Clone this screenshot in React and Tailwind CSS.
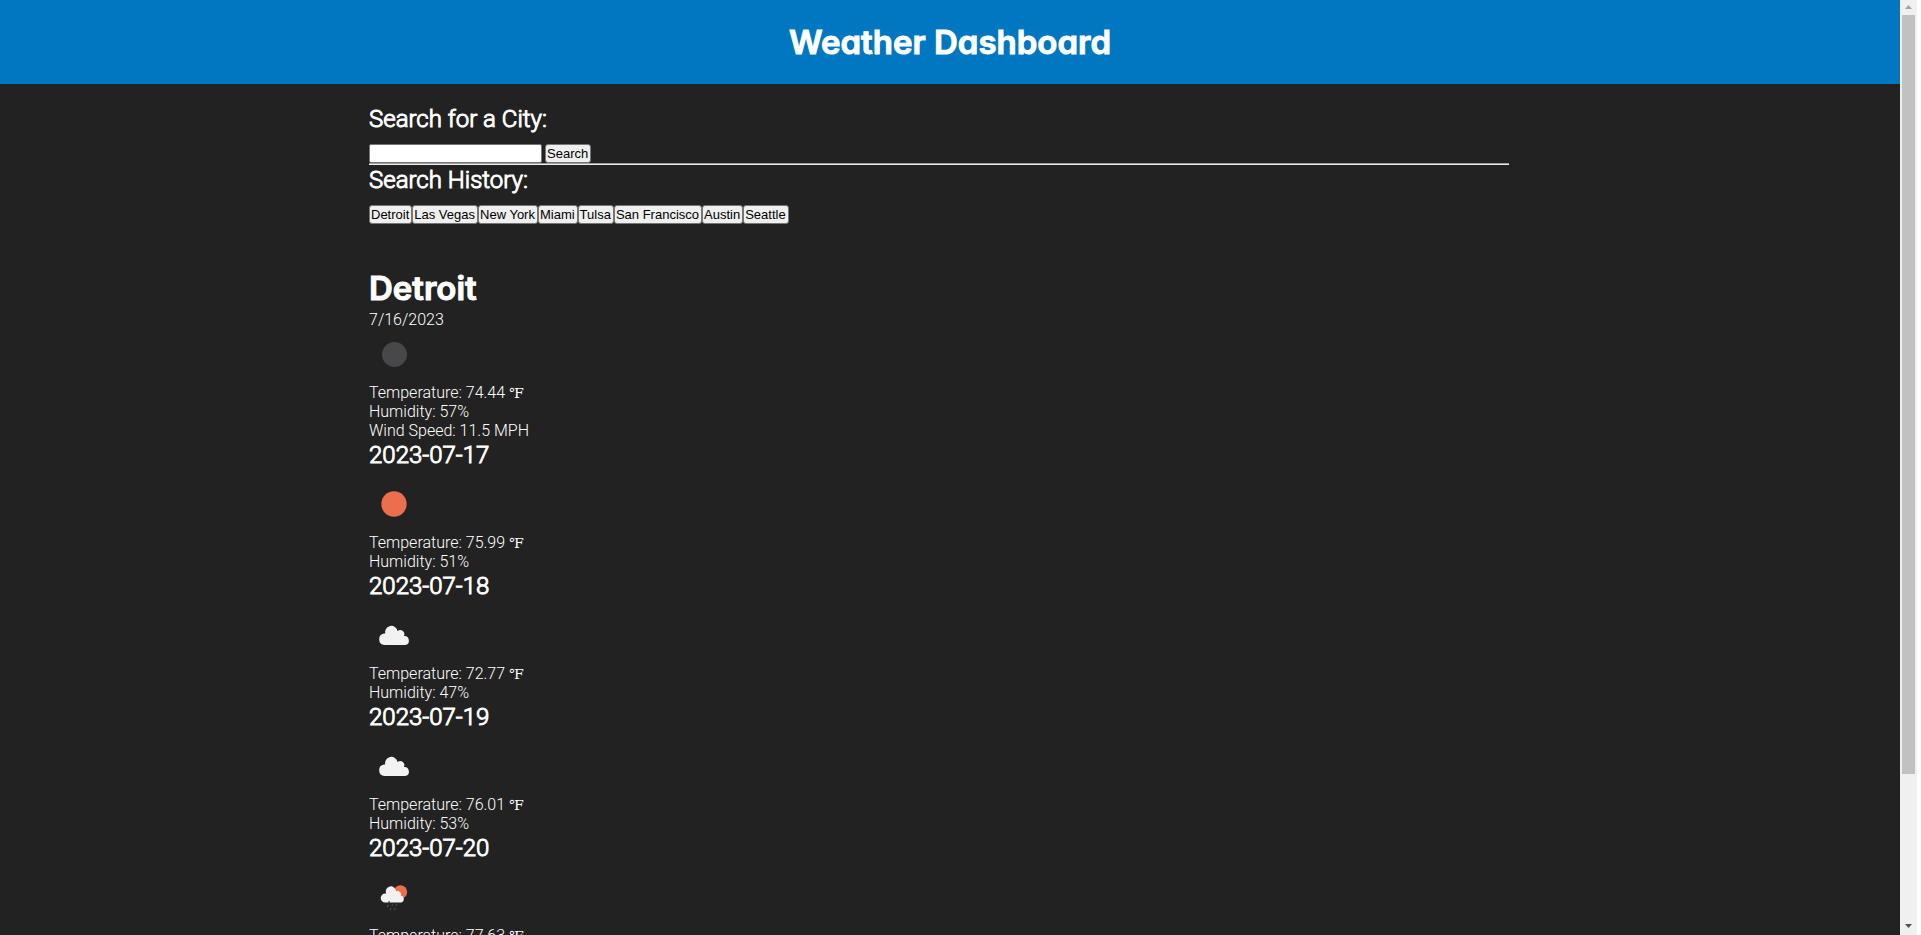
const cities = ['Detroit', 'Las Vegas', 'New York', 'Miami', 'Tulsa', 'San Francisco', 'Austin', 'Seattle'];

const forecast = [
  { date: '2023-07-17', icon: 'sun', temp: '75.99', humidity: 51 },
  { date: '2023-07-18', icon: 'cloud', temp: '72.77', humidity: 47 },
  { date: '2023-07-19', icon: 'cloud', temp: '76.01', humidity: 53 },
  { date: '2023-07-20', icon: 'rain', temp: '77.63', humidity: 55 },
];

function WeatherIcon({ kind }) {
  return (
    <div className="h-[54px]">
      <svg className="block size-[50px]" viewBox="0 0 50 50" aria-hidden="true">
        {kind === 'moon' && <circle cx="25.5" cy="25.5" r="12.5" fill="#48484a" />}
        {kind === 'sun' && <circle cx="25" cy="25" r="12.7" fill="#ec6e4c" />}
        {kind === 'cloud' && (
          <path
            d="M15.5 35a5.800 5.800 0 0 1-.5-11.500a4.900 4.900 0 0 1 1.200 0a6.300 6.300 0 1 1 12.400-2.600a4.200 4.200 0 0 1 6.300 5.200a4.500 4.500 0 0 1 1.300 8.900z"
            fill="#f2f2f2"
          />
        )}
        {kind === 'rain' && (
          <>
            <circle cx="31.500" cy="20" r="6.700" fill="#ec6e4c" />
            <path
              d="M16.300 30.500a4.500 4.500 0 0 1-.2-9a4 4 0 0 1 1 0a5.200 5.200 0 1 1 10-2.200a3.500 3.500 0 0 1 4.800 4.300a3.600 3.600 0 0 1 .7 6.900z"
              fill="#f2f2f2"
            />
            <path
              d="M19.500 30.500l.8-.8M18.400 34.700l.9-1.600M23 33.700l.6-1.200M27.200 33.400l.6-1.200M21.200 37.700l.7-1.200M25.400 37.900l.9-1.700"
              stroke="#48484a"
              strokeWidth="1.3"
              strokeLinecap="round"
            />
          </>
        )}
      </svg>
    </div>
  );
}

function Fahrenheit() {
  return <span className="font-['Liberation_Serif','DejaVu_Serif',serif] text-[14px] leading-none">℉</span>;
}

function Button({ children, ...rest }) {
  return (
    <button
      className="h-[19px] rounded-[3px] border border-[#767676] bg-[#efefef] pr-[2px] pl-[1px] font-['Liberation_Sans',Arial,sans-serif] text-[13px] leading-[17px] text-black"
      {...rest}
    >
      {children}
    </button>
  );
}

function Heading({ children }) {
  return (
    <h2 className="text-[24px] leading-[30px] font-light [-webkit-text-stroke:1px_white]">{children}</h2>
  );
}

const display =
  "font-['Inter','Lato',sans-serif] font-semibold [font-feature-settings:'cv11'] [-webkit-text-stroke:1px_white]";

export default function App() {
  return (
    <div className="flex h-screen overflow-hidden bg-white pr-1">
      <div className="min-w-0 flex-1 overflow-hidden bg-[#222222] font-['Roboto',sans-serif] text-[16px] leading-[19px] font-light text-white">
        <header className="bg-[#0077c0] py-5 text-center">
          <h1 className={`text-[33px] leading-[44px] ${display}`}>Weather Dashboard</h1>
        </header>
        <main className="mx-auto max-w-[1200px] pt-5 pr-[41px] pl-[19px]">
          <section>
            <Heading>
              <label htmlFor="city">Search for a City:</label>
            </Heading>
            <form className="flex gap-[3px] pt-[10px]" onSubmit={(e) => e.preventDefault()}>
              <input
                id="city"
                type="text"
                className="h-[19px] w-[173px] rounded-[2px] border border-[#767676] bg-white px-[1px] font-['Liberation_Sans',Arial,sans-serif] text-[13px] text-black"
              />
              <Button type="submit">Search</Button>
            </form>
            <hr className="h-[2px] border-t border-b border-t-[#9a9a9a] border-b-[#eeeeee]" />
            <Heading>Search History:</Heading>
            <div className="flex pt-[10px]">
              {cities.map((city) => (
                <Button key={city} type="button">{city}</Button>
              ))}
            </div>
          </section>
          <section className="mt-[42px]">
            <h1 className={`text-[33px] leading-[44px] ${display}`}>Detroit</h1>
            <p>7/16/2023</p>
            <WeatherIcon kind="moon" />
            <p>Temperature: 74.44 <Fahrenheit /></p>
            <p>Humidity: 57%</p>
            <p>Wind Speed: 11.5 MPH</p>
          </section>
          {forecast.map((day) => (
            <section key={day.date}>
              <Heading>{day.date}</Heading>
              <div className="pt-[9px]">
                <WeatherIcon kind={day.icon} />
              </div>
              <p>Temperature: {day.temp} <Fahrenheit /></p>
              <p>Humidity: {day.humidity}%</p>
            </section>
          ))}
        </main>
      </div>
      <div className="flex w-[17px] flex-col bg-[#f0f0f0]" aria-hidden="true">
        <svg className="h-[15px] w-[17px] shrink-0" viewBox="0 0 17 15">
          <path d="M5 9L8.500 5L12 9z" fill="#a3a3a3" />
        </svg>
        <div className="min-h-0 flex-1">
          <div className="mr-[2px] ml-[2px] h-[84%] bg-[#c1c1c1]" />
        </div>
        <svg className="h-[17px] w-[17px] shrink-0" viewBox="0 0 17 17">
          <path d="M5 6L8.500 10L12 6z" fill="#505050" />
        </svg>
      </div>
    </div>
  );
}
